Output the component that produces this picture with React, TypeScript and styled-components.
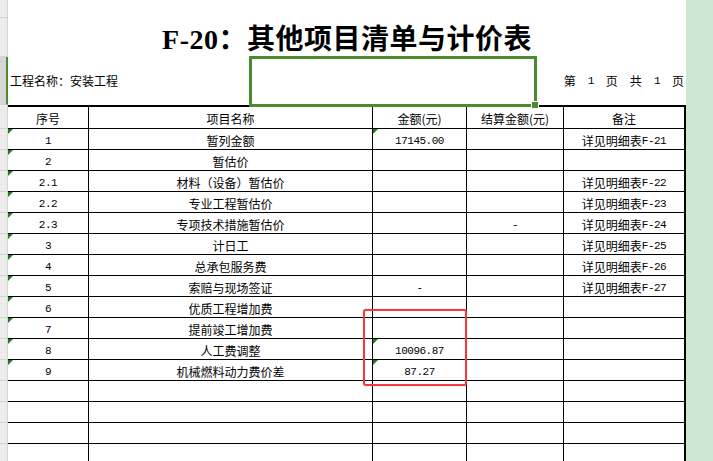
import React from "react";
import styled, { createGlobalStyle } from "styled-components";

const Global = createGlobalStyle`
  html, body { margin: 0; padding: 0; background: #ffffff; }
  #root { width: 713px; height: 461px; }
`;

const Page = styled.div`
  position: relative;
  width: 713px;
  height: 461px;
  overflow: hidden;
  display: flex;
  background: #ffffff;
  font-family: "Noto Sans CJK SC", "Noto Sans", sans-serif;
  color: #000;
`;

const Gutter = styled.div`
  width: 8px;
  flex: none;
  display: flex;
  flex-direction: column;
  background: #e9e9e9;
  overflow: hidden;
`;

const GutterCell = styled.div<{ $h: number; $sel?: boolean }>`
  height: ${(p) => p.$h}px;
  flex: none;
  box-sizing: border-box;
  border-bottom: 1px solid #d3d3d3;
  background: ${(p) => (p.$sel ? "#d6d6d6" : "#ececec")};
  border-right: ${(p) => (p.$sel ? "2px solid #4b8b2b" : "1px solid #d3d3d3")};
`;

const Sheet = styled.div`
  width: 678px;
  flex: none;
  display: flex;
  flex-direction: column;
  overflow: hidden;
`;

const SideStrip = styled.div`
  flex: 1;
  background: #cde8d0;
`;

const TitleRow = styled.div`
  height: 57px;
  flex: none;
  box-sizing: border-box;
  padding-top: 25px;
  text-align: center;
  font-family: "Liberation Serif", "Noto Sans CJK SC", serif;
  font-weight: 700;
  font-size: 28px;
  line-height: 30px;
  letter-spacing: 0.5px;
`;

const InfoRow = styled.div`
  height: 48px;
  flex: none;
  box-sizing: border-box;
  display: flex;
  align-items: flex-end;
  justify-content: space-between;
  padding: 0 2px 17px 2px;
  font-size: 12px;
  line-height: 14px;
`;

const PageCount = styled.div`
  display: flex;
  gap: 12px;
`;

const Table = styled.div`
  display: flex;
  flex-direction: column;
  border-top: 2px solid #000;
  border-right: 2px solid #000;
  flex: none;
`;

const Row = styled.div<{ $head?: boolean }>`
  display: grid;
  grid-template-columns: 81px 284px 94px 97px 120px;
  height: ${(p) => (p.$head ? 22 : 21)}px;
  flex: none;
  box-sizing: border-box;
  border-bottom: 1px solid #000;
`;

const Cell = styled.div`
  position: relative;
  box-sizing: border-box;
  border-right: 1px solid #000;
  display: flex;
  align-items: center;
  justify-content: center;
  padding-top: 3px;
  font-size: 12px;
  line-height: 14px;
  white-space: nowrap;
  &:last-child { border-right: none; }
`;

const Num = styled.span`
  font-family: "Liberation Mono", "DejaVu Sans Mono", monospace;
  font-size: 11px;
  letter-spacing: -0.5px;
`;

const Mark = styled.span`
  position: absolute;
  left: 0;
  top: 0;
  width: 0;
  height: 0;
  border-top: 5px solid #1f7a1f;
  border-right: 5px solid transparent;
`;

const Selection = styled.div`
  position: absolute;
  left: 249px;
  top: 56px;
  width: 288px;
  height: 51px;
  box-sizing: border-box;
  border: 3px solid #4b8b2b;
`;

const Handle = styled.div`
  position: absolute;
  right: -5px;
  bottom: -5px;
  width: 6px;
  height: 6px;
  background: #4b8b2b;
  border: 1px solid #ffffff;
`;

const RedBox = styled.div`
  position: absolute;
  left: 363px;
  top: 309px;
  width: 104px;
  height: 77px;
  box-sizing: border-box;
  border: 2px solid #f23a3a;
  border-radius: 3px;
  box-shadow: 0 0 1px rgba(242, 58, 58, 0.6);
`;

type RowData = {
  no: string;
  name: string;
  amt?: string;
  settle?: string;
  note?: string;
  amtMark?: boolean;
};

const rows: RowData[] = [
  { no: "1", name: "暂列金额", amt: "17145.00", note: "F-21", amtMark: true },
  { no: "2", name: "暂估价" },
  { no: "2.1", name: "材料（设备）暂估价", note: "F-22" },
  { no: "2.2", name: "专业工程暂估价", note: "F-23" },
  { no: "2.3", name: "专项技术措施暂估价", settle: "-", note: "F-24" },
  { no: "3", name: "计日工", note: "F-25" },
  { no: "4", name: "总承包服务费", note: "F-26" },
  { no: "5", name: "索赔与现场签证", amt: "-", note: "F-27" },
  { no: "6", name: "优质工程增加费" },
  { no: "7", name: "提前竣工增加费" },
  { no: "8", name: "人工费调整", amt: "10096.87", amtMark: true },
  { no: "9", name: "机械燃料动力费价差", amt: "87.27", amtMark: true },
];

const emptyRows = [0, 1, 2, 3, 4];

export default function App() {
  return (
    <>
      <Global />
      <Page>
        <Gutter>
          <GutterCell $h={18} />
          <GutterCell $h={39} />
          <GutterCell $h={48} $sel />
          <GutterCell $h={24} />
          {Array.from({ length: 17 }).map((_, i) => (
            <GutterCell key={"g" + i} $h={21} />
          ))}
        </Gutter>
        <Sheet>
          <TitleRow>F-20：其他项目清单与计价表</TitleRow>
          <InfoRow>
            <span>工程名称：安装工程</span>
            <PageCount>
              <span>第</span>
              <Num>1</Num>
              <span>页</span>
              <span>共</span>
              <Num>1</Num>
              <span>页</span>
            </PageCount>
          </InfoRow>
          <Table>
            <Row $head>
              <Cell>序号</Cell>
              <Cell>项目名称</Cell>
              <Cell>金额(元)</Cell>
              <Cell>结算金额(元)</Cell>
              <Cell>备注</Cell>
            </Row>
            {rows.map((r) => (
              <Row key={r.no}>
                <Cell>
                  <Mark />
                  <Num>{r.no}</Num>
                </Cell>
                <Cell>{r.name}</Cell>
                <Cell>
                  {r.amtMark && <Mark />}
                  {r.amt && <Num>{r.amt}</Num>}
                </Cell>
                <Cell>{r.settle && <Num>{r.settle}</Num>}</Cell>
                <Cell>
                  {r.note && (
                    <>
                      详见明细表<Num>{r.note}</Num>
                    </>
                  )}
                </Cell>
              </Row>
            ))}
            {emptyRows.map((i) => (
              <Row key={"e" + i}>
                <Cell />
                <Cell />
                <Cell />
                <Cell />
                <Cell />
              </Row>
            ))}
          </Table>
        </Sheet>
        <SideStrip />
        <Selection>
          <Handle />
        </Selection>
        <RedBox />
      </Page>
    </>
  );
}
